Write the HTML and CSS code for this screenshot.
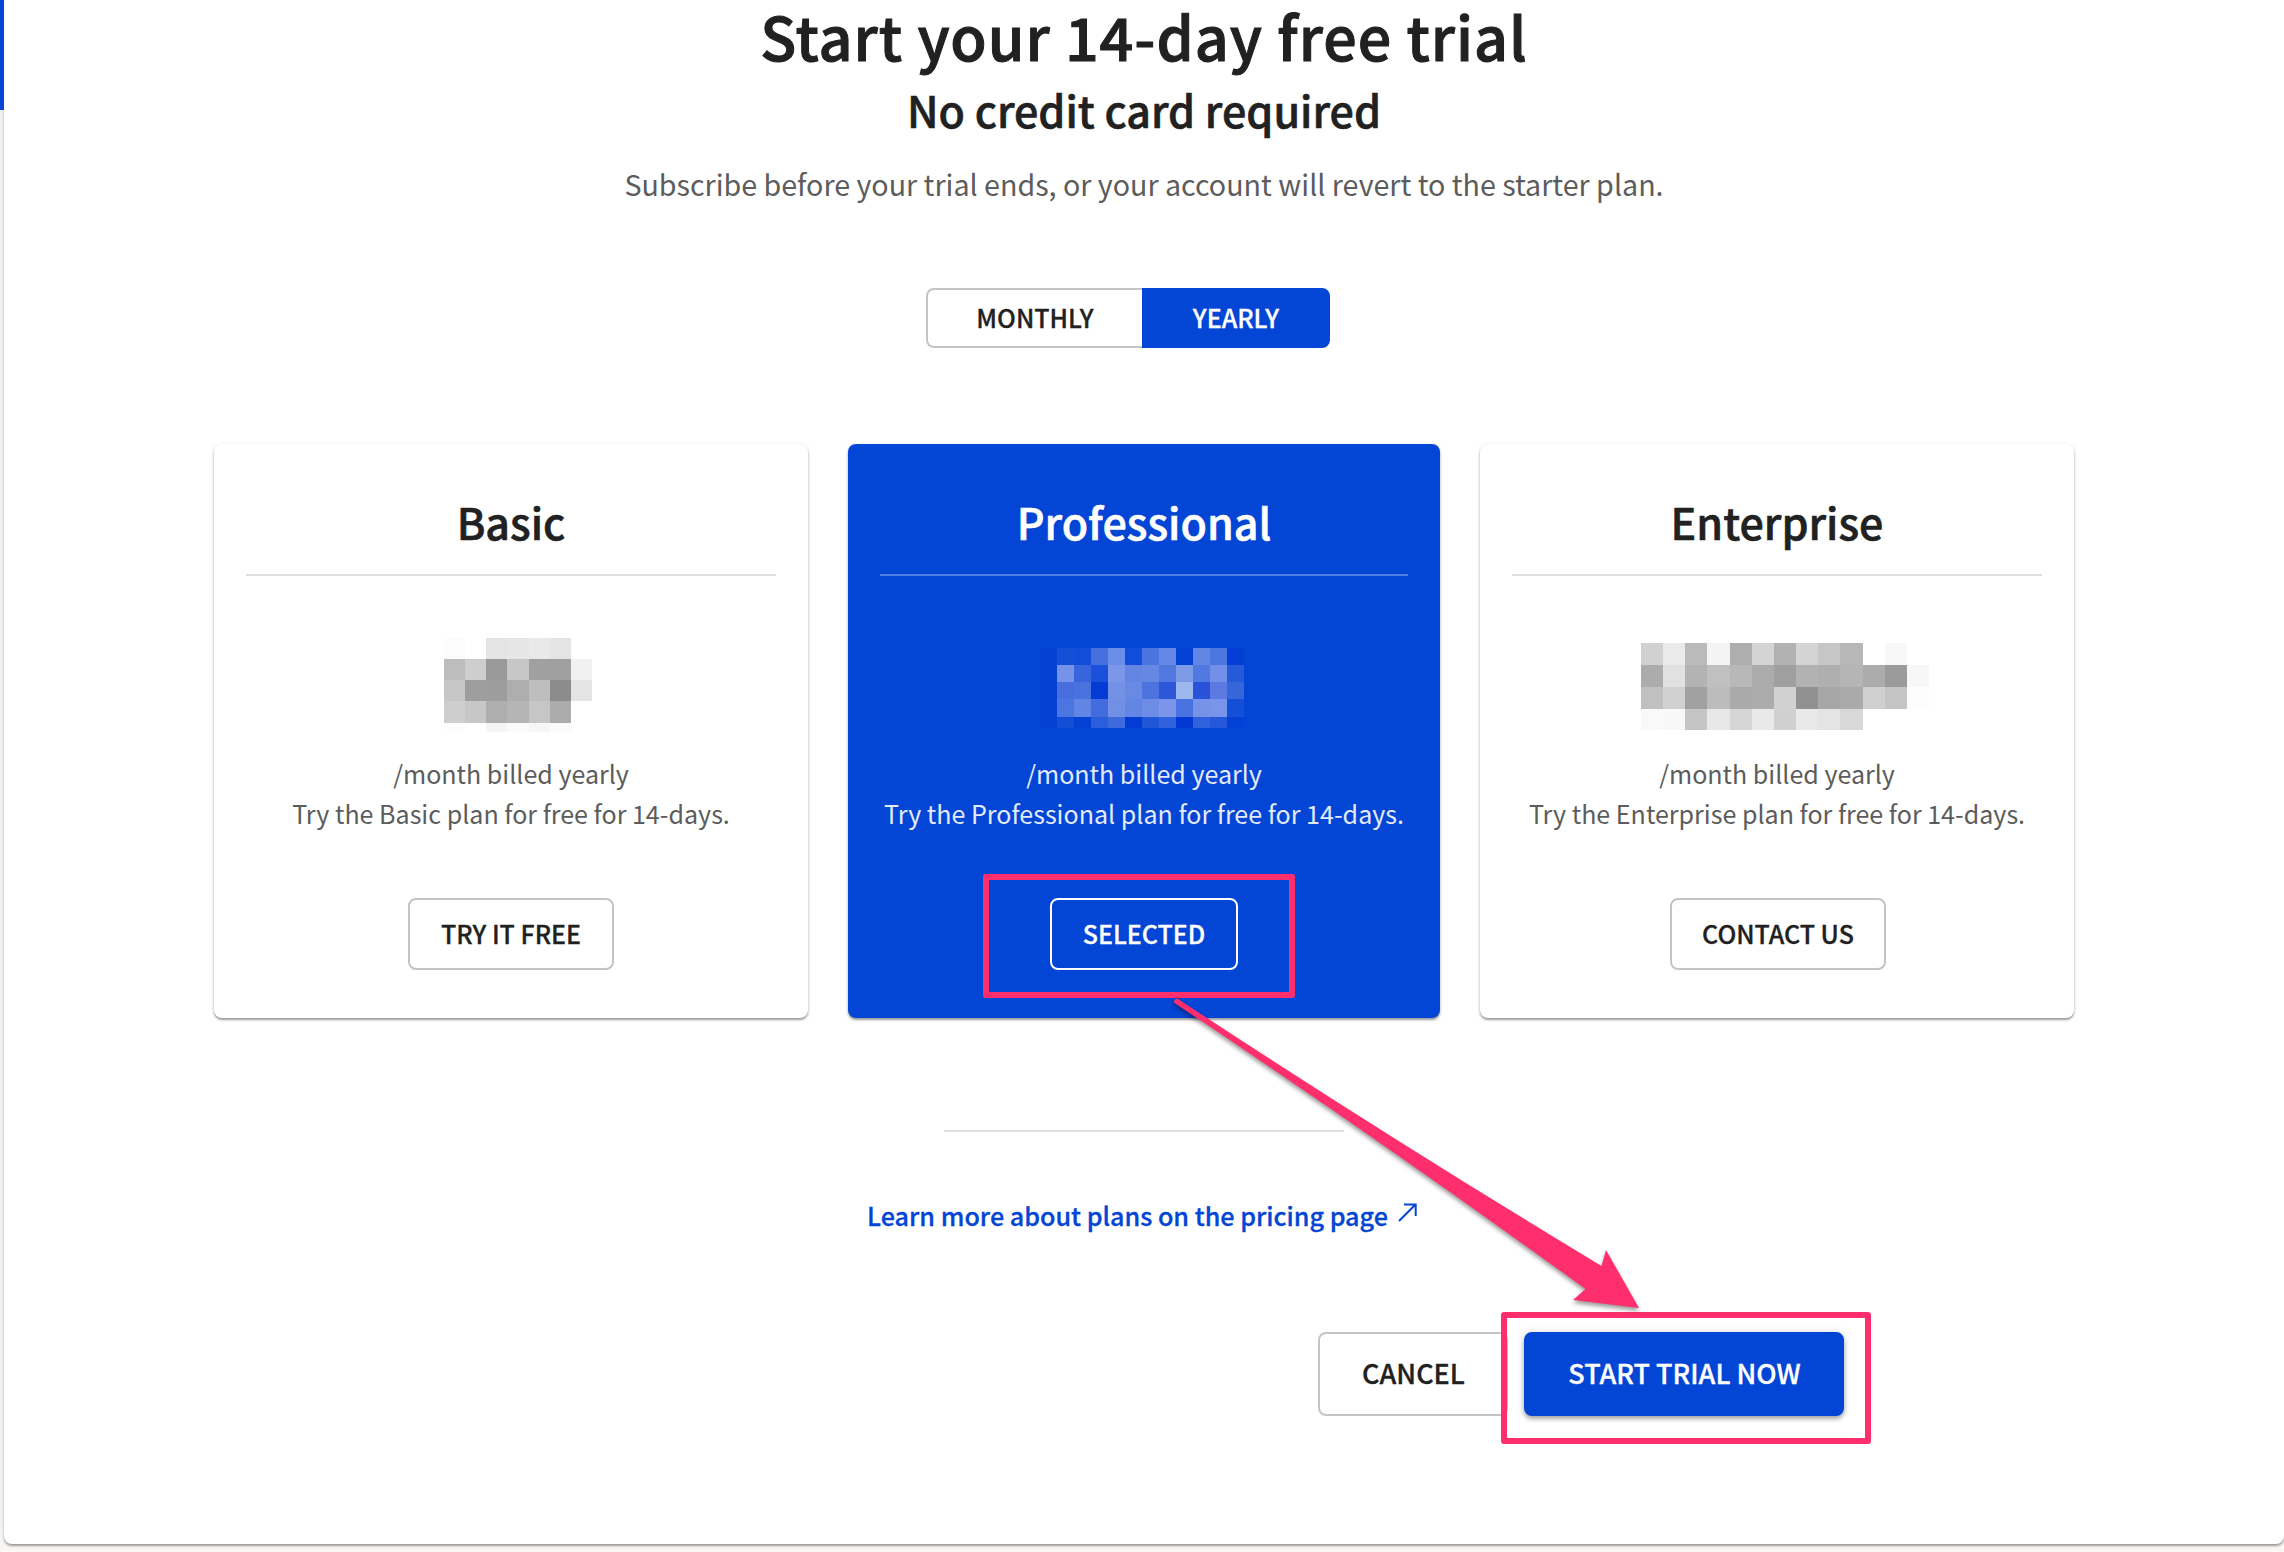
FILE: index.html
```html
<!DOCTYPE html>
<html lang="en">
<head>
<meta charset="utf-8">
<title>Start your 14-day free trial</title>
<link rel="stylesheet" href="styles.css">
</head>
<body>
<div class="rail"></div>
<main class="panel">
  <h1 class="title">Start your 14-day free trial</h1>
  <h2 class="subtitle">No credit card required</h2>
  <p class="note">Subscribe before your trial ends, or your account will revert to the starter plan.</p>
  <div class="toggle">
    <button class="toggle-item monthly">MONTHLY</button>
    <button class="toggle-item yearly">YEARLY</button>
  </div>
  <section class="plans">
    <article class="card">
      <h3 class="plan">Basic</h3>
      <div class="price"><svg id="price-basic" class="mosaic" width="170" height="120"></svg></div>
      <p class="terms">/month billed yearly</p>
      <p class="terms">Try the Basic plan for free for 14-days.</p>
      <button class="pick pick-basic">TRY IT FREE</button>
    </article>
    <article class="card selected">
      <h3 class="plan">Professional</h3>
      <div class="price"><svg id="price-pro" class="mosaic" width="240" height="110"></svg></div>
      <p class="terms">/month billed yearly</p>
      <p class="terms">Try the Professional plan for free for 14-days.</p>
      <button class="pick pick-pro">SELECTED</button>
    </article>
    <article class="card">
      <h3 class="plan">Enterprise</h3>
      <div class="price"><svg id="price-ent" class="mosaic" width="340" height="110"></svg></div>
      <p class="terms">/month billed yearly</p>
      <p class="terms">Try the Enterprise plan for free for 14-days.</p>
      <button class="pick pick-ent">CONTACT US</button>
    </article>
  </section>
  <hr class="divider">
  <a class="learn"><span>Learn more about plans on the pricing page</span><svg class="ext" width="20" height="20" viewBox="0 0 20 20"><path d="M1 18L17.5 1.5M6 1.5H17.7V13" fill="none" stroke="#0345d5" stroke-width="2"/></svg></a>
  <div class="actions">
    <button class="cancel">CANCEL</button>
    <button class="start">START TRIAL NOW</button>
  </div>
</main>
<svg class="marks" width="2284" height="1552" viewBox="0 0 2284 1552">
  <g fill="none" stroke="#ff2f6d" stroke-width="6" stroke-linejoin="round">
    <rect x="986" y="877" width="306" height="118"/>
    <rect x="1504" y="1315" width="364" height="126"/>
  </g>
  <path class="arrow" fill="#ff2f6d" d="M1178 999Q1388 1137 1601.500 1266L1606 1250L1639 1308L1573 1300L1585.500 1289Q1380 1140 1174.500 1003A2.800 2.800 0 0 1 1178 999Z"/>
</svg>
<script src="script.js"></script>
</body>
</html>
```
FILE: styles.css
```css
* { box-sizing: border-box; }
body {
  margin: 0;
  width: 2284px;
  height: 1552px;
  overflow: hidden;
  position: relative;
  background: #faf7f6;
  color: #212121;
  font-family: "Noto Sans CJK SC", "Open Sans", sans-serif;
}
h1, h2, h3, p { margin: 0; font-weight: 500; white-space: nowrap; }
button {
  font: inherit;
  font-weight: 500;
  color: inherit;
  background: #fff;
  border: 2px solid #c4c4c4;
  border-radius: 8px;
  padding: 0;
  white-space: nowrap;
  -webkit-text-stroke: .3px currentColor;
}
.rail { position: absolute; left: 0; top: 0; width: 4px; height: 110px; background: #0345d5; }
.panel {
  margin-left: 4px;
  height: 1544px;
  display: flex;
  flex-direction: column;
  align-items: center;
  background: #fff;
  border-radius: 0 0 8px 8px;
  box-shadow: 0 2px 2px rgba(0,0,0,.32), 0 0 6px rgba(0,0,0,.12);
}
.title { font-size: 59.2px; line-height: 71px; padding-bottom: 2px; letter-spacing: .98px; -webkit-text-stroke: 1px currentColor; }
.subtitle { font-size: 43px; line-height: 73px; -webkit-text-stroke: .6px currentColor; }
.note { font-size: 28.65px; line-height: 75px; font-weight: 400; color: #5c5c5c; }
.toggle { display: flex; height: 60px; width: 404px; margin: 67px 32px 0 0; font-size: 25px; }
.toggle-item { line-height: 54px; padding-bottom: 2px; }
.monthly { width: 216px; border-right: 0; border-radius: 8px 0 0 8px; }
.yearly { width: 188px; border-color: #0345d5; border-radius: 0 8px 8px 0; background: #0345d5; color: #fff; }
.plans { display: grid; grid-template-columns: 594px 592px 594px; gap: 40px; margin-top: 96px; }
.card {
  height: 574px;
  padding: 40px 32px 0;
  display: flex;
  flex-direction: column;
  align-items: center;
  border-radius: 8px;
  box-shadow: 0 2px 2px rgba(0,0,0,.34), 0 1px 5px rgba(0,0,0,.1);
}
.plan {
  align-self: stretch;
  text-align: center;
  font-size: 43px;
  line-height: 74px;
  padding-bottom: 16px;
  border-bottom: 2px solid #e0e0e0;
  -webkit-text-stroke: .6px currentColor;
}
.price { height: 177px; display: flex; justify-content: center; align-items: flex-start; }
.mosaic { display: block; margin-top: 44px; }
#price-pro { margin: 54px 0 0 12px; }
#price-ent { margin: 54px 0 0 6px; }
.terms { font-size: 25.05px; line-height: 40px; font-weight: 400; color: #5c5c5c; }
.pick { height: 72px; margin-top: 65px; font-size: 25px; line-height: 66px; padding-bottom: 2px; }
.pick-basic { width: 206px; }
.pick-pro { width: 188px; }
.pick-ent { width: 216px; margin-left: 2px; }
.selected { background: #0345d5; color: #fff; }
.selected .plan { border-color: #4f7de2; }
.selected .terms { color: #e3eafb; }
.selected .pick { background: none; border-color: #fff; }
.divider { width: 400px; height: 2px; margin: 112px 0 0; border: 0; background: #e0e0e0; flex: none; }
.learn { display: flex; gap: 10px; margin: 63px 3px 0 0; height: 40px; font-size: 25.15px; line-height: 40px; font-weight: 500; color: #0345d5; white-space: nowrap; -webkit-text-stroke: .3px currentColor; }
.ext { margin-top: 8px; }
.actions { align-self: flex-end; display: flex; gap: 16px; margin: 97px 440px 0 0; font-size: 27px; }
.actions button { height: 84px; line-height: 78px; padding: 0 0 2px 1px; }
.cancel { width: 190px; }
.actions .start { width: 320px; border-color: #0345d5; background: #0345d5; color: #fff; box-shadow: 0 3px 4px rgba(0,0,0,.3), 0 0 8px rgba(0,0,0,.12); }
.marks { position: absolute; left: 0; top: 0; pointer-events: none; }
.arrow { filter: drop-shadow(0 3px 2px rgba(0,0,0,.4)); }
```
FILE: script.js
```js
// Pixelated price blocks: column edges, row edges, and one colour per cell.
function mosaic(id, xs, ys, rows) {
  const svg = document.getElementById(id);
  rows.forEach((row, r) => row.split(" ").forEach((c, i) => {
    if (c === "-") return;
    const rect = document.createElementNS("http://www.w3.org/2000/svg", "rect");
    rect.setAttribute("x", xs[i]);
    rect.setAttribute("y", ys[r]);
    rect.setAttribute("width", xs[i + 1] - xs[i]);
    rect.setAttribute("height", ys[r + 1] - ys[r]);
    rect.setAttribute("fill", "#" + (c.length === 2 ? c + c + c : c));
    svg.appendChild(rect);
  }));
}
const steps = (start, step, n) => Array.from({ length: n + 1 }, (_, i) => Math.round(start + step * i));

mosaic("price-basic", steps(18, 21.15, 7), [18, 39, 60, 81, 103, 112], [
  "fc - e4 e6 e9 e4 -",
  "bd ce 9a c7 a0 a0 f1",
  "c6 9e 9d ae be 8c e4",
  "ce c7 ae b5 c6 ac -",
  "fd - f5 fb f6 fb -"
]);
mosaic("price-pro", steps(10, 17, 12), [18, 35, 52, 69, 87, 98], [
  "0341d2 164fd7 114dd6 456fdd 6a8de5 124cda 4c74df 6487e5 0341d5 6386e4 4c77e0 033fd7",
  "0341d2 7793e9 3765dc 1b51da 7c97e9 6485e4 6588e3 5279e0 7c9ce8 5079e1 7290e9 255adb",
  "0341d2 476ddf 4a72df 033bd5 7391e5 688ae4 4c73e0 2e56d9 9cb8ee 2a52d8 5b7ae2 3766db",
  "0341d2 4b76e1 6284e5 426cdd 7190e5 6385e3 6c8ce5 7a95ea 4772df 7793e9 7995ea 144fd7",
  "0341d2 114dd5 0341d2 2b5edb 3f6ade 033cd2 2056d8 3061dc 0339d2 3061dd 2458d9 0341d4"
]);
mosaic("price-ent", steps(31, 22.15, 13), [13, 35, 57, 79, 100], [
  "d1 ea ba f4 ae d4 b2 d4 c6 b7 - f8 -",
  "ac e1 b3 c0 b8 ab 9f b2 af b5 ac 9b f7",
  "c0 d1 a1 bc aa ac d1 91 a7 aa cf c5 fd",
  "f9 f8 c5 e8 d5 e9 d0 e9 e4 d8 - - -"
]);
```
